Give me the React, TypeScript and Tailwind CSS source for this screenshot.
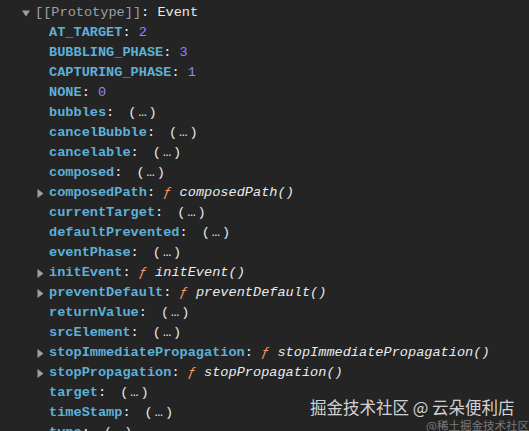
const rows: { name: string; kind: 'num' | 'lazy' | 'fn'; value?: string }[] = [
  { name: 'AT_TARGET', kind: 'num', value: '2' },
  { name: 'BUBBLING_PHASE', kind: 'num', value: '3' },
  { name: 'CAPTURING_PHASE', kind: 'num', value: '1' },
  { name: 'NONE', kind: 'num', value: '0' },
  { name: 'bubbles', kind: 'lazy' },
  { name: 'cancelBubble', kind: 'lazy' },
  { name: 'cancelable', kind: 'lazy' },
  { name: 'composed', kind: 'lazy' },
  { name: 'composedPath', kind: 'fn' },
  { name: 'currentTarget', kind: 'lazy' },
  { name: 'defaultPrevented', kind: 'lazy' },
  { name: 'eventPhase', kind: 'lazy' },
  { name: 'initEvent', kind: 'fn' },
  { name: 'preventDefault', kind: 'fn' },
  { name: 'returnValue', kind: 'lazy' },
  { name: 'srcElement', kind: 'lazy' },
  { name: 'stopImmediatePropagation', kind: 'fn' },
  { name: 'stopPropagation', kind: 'fn' },
  { name: 'target', kind: 'lazy' },
  { name: 'timeStamp', kind: 'lazy' },
  { name: 'type', kind: 'lazy' },
];

function Arrow({ open }: { open?: boolean }) {
  if (open) {
    return (
      <svg width="8" height="7" viewBox="0 0 8 7" className="mt-[1px]">
        <path d="M0 0.5 H8 L4 6.5 Z" fill="#9aa0a6" />
      </svg>
    );
  }
  return (
    <svg width="7" height="9" viewBox="0 0 7 9">
      <path d="M0.5 0 V9 L6.5 4.5 Z" fill="#9aa0a6" />
    </svg>
  );
}

export default function App() {
  return (
    <div className="relative w-[529px] h-[431px] overflow-hidden bg-[#242424] pt-[3px] font-['Liberation_Mono','DejaVu_Sans_Mono',monospace] text-[13.6px] leading-[20px] text-[#e8eaed]">
      <div className="flex items-center pl-[22px] h-[20px]">
        <span className="w-[13px] flex items-center">
          <Arrow open />
        </span>
        <span className="text-[#9aa0a6]">[[Prototype]]</span>
        <span>: Event</span>
      </div>

      {rows.map((r) => (
        <div key={r.name} className="flex items-center pl-[37px] h-[20px] whitespace-pre">
          <span className="w-[12px] flex items-center">{r.kind === 'fn' && <Arrow />}</span>
          <span className="font-bold text-[#5db0d7]">{r.name}</span>
          <span className="text-[#e8eaed]">:</span>
          {r.kind === 'num' && <span className="text-[#9980ff]"> {r.value}</span>}
          {r.kind === 'lazy' && (
            <span className="ml-[14px] tracking-[2px] text-[#e8eaed]">(…)</span>
          )}
          {r.kind === 'fn' && (
            <>
              <span className="text-[#f29766] italic"> ƒ </span>
              <span className="italic text-[#e8eaed]">{r.name}()</span>
            </>
          )}
        </div>
      ))}

      <div className="absolute left-[310px] top-[397px] font-['Noto_Sans_CJK_SC',sans-serif] text-[16.5px] leading-[20px] text-[#e8e8e8]/90 whitespace-nowrap">
        掘金技术社区 @ 云朵便利店
      </div>
      <div className="absolute left-[426px] top-[418px] font-['Noto_Sans_CJK_SC',sans-serif] text-[11.5px] leading-[14px] text-[#7a7a7a] whitespace-nowrap">
        @稀土掘金技术社区
      </div>
    </div>
  );
}
